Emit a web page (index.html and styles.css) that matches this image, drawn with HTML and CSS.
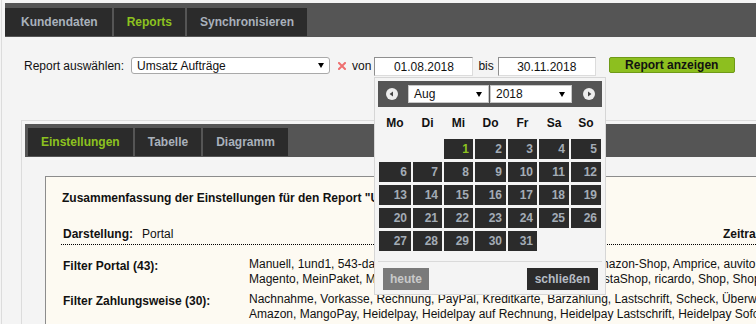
FILE: index.html
```html
<!DOCTYPE html>
<html lang="de">
<head>
<meta charset="utf-8">
<title>Reports</title>
<link rel="stylesheet" href="styles.css">
</head>
<body>
<div class="page">
  <nav class="topbar">
    <div class="tab first">Kundendaten</div>
    <div class="tab active">Reports</div>
    <div class="tab">Synchronisieren</div>
  </nav>

  <div class="formrow">
    <span class="lbl">Report auswählen:</span>
    <div class="select main-select"><span>Umsatz Aufträge</span><i class="arrow"></i></div>
    <svg class="clear" viewBox="0 0 8 8" width="8" height="8"><path d="M1 1 L7 7 M7 1 L1 7" stroke="#ee6f6f" stroke-width="2" stroke-linecap="square"/></svg>
    <span class="lbl von">von</span>
    <div class="input">01.08.2018</div>
    <span class="lbl bis">bis</span>
    <div class="input input2">30.11.2018</div>
    <button class="btn-green">Report anzeigen</button>
  </div>

  <section class="panel">
    <nav class="subbar">
      <div class="tab active">Einstellungen</div>
      <div class="tab">Tabelle</div>
      <div class="tab">Diagramm</div>
    </nav>
    <div class="summary">
      <h2 class="sum-title">Zusammenfassung der Einstellungen für den Report "Umsatz Aufträge"</h2>
      <div class="dar-row">
        <div class="dar-left"><b>Darstellung:</b><span class="dar-val">Portal</span></div>
        <div class="dar-right"><b>Zeitraum:</b> 01.08.2018 - 30.11.2018</div>
      </div>
      <div class="frow first">
        <div class="flabel">Filter Portal (43):</div>
        <div class="fval">Manuell, 1und1, 543-days, Afterbuy, Allyouneed, Avito, Amazon, Amazon-Shop, Amprice, auvito, billiger.de, Cdiscount<br>Magento, MeinPaket, Mercado, Modified, OpenCart, Otto, Pixi, PrestaShop, ricardo, Shop, Shopware, Shopify</div>
      </div>
      <div class="frow">
        <div class="flabel">Filter Zahlungsweise (30):</div>
        <div class="fval">Nachnahme, Vorkasse, Rechnung, PayPal, Kreditkarte, Barzahlung, Lastschrift, Scheck, Überweisung, Sofortüberweisung<br>Amazon, MangoPay, Heidelpay, Heidelpay auf Rechnung, Heidelpay Lastschrift, Heidelpay Sofortüberweisung</div>
      </div>
    </div>
  </section>
</div>

<div class="datepicker">
  <div class="dp-head">
    <svg class="nav-icon" viewBox="0 0 12 12" width="12" height="12"><circle cx="6" cy="6" r="6" fill="#eeeeee"/><path d="M3.6 6 L7 3.6 L7 8.4 Z" fill="#444"/></svg>
    <div class="dp-select month"><span>Aug</span><i class="arrow"></i></div>
    <div class="dp-select year"><span>2018</span><i class="arrow"></i></div>
    <svg class="nav-icon next" viewBox="0 0 12 12" width="12" height="12"><circle cx="6" cy="6" r="6" fill="#eeeeee"/><path d="M8.4 6 L5 3.6 L5 8.4 Z" fill="#444"/></svg>
  </div>
  <div class="dp-cols dp-names">
    <span>Mo</span><span>Di</span><span>Mi</span><span>Do</span><span>Fr</span><span>Sa</span><span>So</span>
  </div>
  <div class="dp-cols dp-grid">
    <span class="empty"></span><span class="empty"></span>
    <span class="day current">1</span><span class="day">2</span><span class="day">3</span><span class="day">4</span><span class="day">5</span>
    <span class="day">6</span><span class="day">7</span><span class="day">8</span><span class="day">9</span><span class="day">10</span><span class="day">11</span><span class="day">12</span>
    <span class="day">13</span><span class="day">14</span><span class="day">15</span><span class="day">16</span><span class="day">17</span><span class="day">18</span><span class="day">19</span>
    <span class="day">20</span><span class="day">21</span><span class="day">22</span><span class="day">23</span><span class="day">24</span><span class="day">25</span><span class="day">26</span>
    <span class="day">27</span><span class="day">28</span><span class="day">29</span><span class="day">30</span><span class="day">31</span>
  </div>
  <div class="dp-buttons">
    <span class="dp-btn today">heute</span>
    <span class="dp-btn close">schließen</span>
  </div>
</div>
</body>
</html>
```
FILE: styles.css
```css
* { box-sizing: border-box; }

html, body {
  margin: 0;
  width: 756px;
  height: 324px;
  overflow: hidden;
}

body {
  position: relative;
  background: #f4f4f4;
  font-family: "Liberation Sans", Arial, sans-serif;
  font-size: 12px;
  color: #111;
}

.page {
  margin-left: 1px;
  border-left: 1px solid #dcdcdc;
  padding: 3px 0 0 3px;
  height: 324px;
}

/* tab bars */
.topbar,
.subbar {
  display: flex;
  align-items: flex-end;
  gap: 2px;
  background: #555;
}

.topbar {
  height: 34px;
  padding-bottom: 1px;
}

.subbar {
  height: 33px;
  padding: 0 0 1px 3px;
}

.tab {
  height: 28px;
  line-height: 28px;
  padding: 0 13px;
  background: #2b2b2b;
  color: #a9b1bb;
  font-weight: bold;
  white-space: nowrap;
}

.tab.first { padding: 0 14px 0 16px; }

.tab.active { color: #8dc21f; }

/* form row */
.formrow {
  display: flex;
  align-items: flex-start;
  height: 19px;
  margin-top: 20px;
  padding-left: 19px;
}

.lbl {
  line-height: 18px;
  white-space: nowrap;
}

.select {
  display: flex;
  align-items: center;
  justify-content: space-between;
  background: #fff;
}

.main-select {
  width: 199px;
  height: 17px;
  margin-left: 7px;
  padding: 0 5px;
  border: 1px solid #a9a9a9;
  border-radius: 3px;
}

.arrow {
  display: block;
  width: 0;
  height: 0;
  border-left: 3px solid transparent;
  border-right: 3px solid transparent;
  border-top: 5px solid #000;
}

.clear {
  display: block;
  margin: 5px 0 0 8px;
}

.von { margin-left: 6px; }

.input {
  width: 99px;
  height: 19px;
  margin-left: 3px;
  border: 1px solid;
  border-color: #8f8f8f #dcdcdc #dcdcdc #8f8f8f;
  background: #fff;
  text-align: center;
  line-height: 18px;
}

.bis { margin: 0 4px 0 5px; }

.input2 {
  width: 98px;
  margin-left: 0;
}

.btn-green {
  width: 126px;
  height: 16px;
  margin-left: 13px;
  padding: 0;
  border: 1px solid #6f9a17;
  border-radius: 2px;
  background: #8dbf1f;
  font-family: inherit;
  font-size: 12px;
  font-weight: bold;
  line-height: 14px;
  color: #111;
}

/* panel */
.panel {
  width: 1000px;
  margin: 44px 0 0 16px;
  border: 1px solid #dcdcdc;
  padding: 3px;
  height: 260px;
}

.summary {
  margin: 19px 0 0 20px;
  border: 1px solid #8c8c8c;
  background: #fdfaf2;
  padding: 14px 0 0 15px;
  height: 200px;
}

.sum-title {
  margin: 0 0 0 1px;
  font-size: 12px;
  font-weight: bold;
  line-height: 14px;
  white-space: nowrap;
}

.dar-row {
  display: flex;
  margin-top: 22px;
  padding: 0 0 3px 2px;
  border-bottom: 1px dotted #000;
  line-height: 14px;
  white-space: nowrap;
}

.dar-left { flex: 0 0 660px; }

.dar-val { margin-left: 9px; }

.frow {
  display: flex;
  margin-top: 5px;
  padding-left: 2px;
  line-height: 15px;
  white-space: nowrap;
}

.frow.first { margin-top: 12px; }

.flabel {
  flex: 0 0 186px;
  padding-top: 2px;
  font-weight: bold;
}

/* datepicker overlay */
.datepicker {
  position: absolute;
  left: 374px;
  top: 77px;
  width: 232px;
  padding: 3px;
  border: 1px solid #d6d6d6;
  background: #f4f4f4;
}

.dp-head {
  display: flex;
  align-items: center;
  height: 26px;
  padding: 0 7px 0 8px;
  background: #555;
}

.nav-icon { display: block; }

.dp-select {
  display: flex;
  align-items: center;
  justify-content: space-between;
  height: 18px;
  padding: 0 6px 0 5px;
  border: 1px solid #c8c8c8;
  background: #fff;
  line-height: 16px;
}

.dp-select.month {
  width: 81px;
  margin-left: 10px;
}

.dp-select.year {
  width: 82px;
  margin-left: 1px;
}

.nav-icon.next { margin-left: 11px; }

.dp-cols {
  display: grid;
  grid-template-columns: 32px 29px 29px 31px 29px 30px 30px;
  column-gap: 2px;
  padding-left: 1px;
}

.dp-names span {
  height: 32px;
  line-height: 32px;
  text-align: center;
  font-weight: bold;
}

.dp-grid { row-gap: 3px; }

.dp-grid span {
  height: 20px;
  line-height: 20px;
}

.day {
  padding-right: 4px;
  background: #2b2b2b;
  color: #a3acb6;
  font-weight: bold;
  text-align: right;
}

.day.current { color: #8dc21f; }

.dp-buttons {
  display: flex;
  justify-content: space-between;
  margin-top: 10px;
  padding: 6px 4px 1px 5px;
  border-top: 1px solid #dadada;
}

.dp-btn {
  height: 22px;
  line-height: 22px;
  font-weight: bold;
}

.dp-btn.today {
  padding: 0 7px;
  background: #7a7a7a;
  color: #c9c9c9;
}

.dp-btn.close {
  padding: 0 8px;
  background: #2b2b2b;
  color: #b5bcc4;
}
```
